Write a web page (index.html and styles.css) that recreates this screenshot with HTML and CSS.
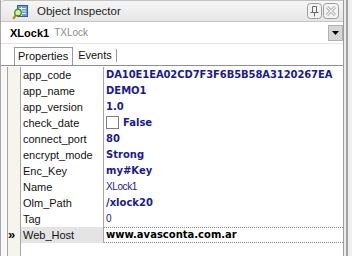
FILE: index.html
```html
<!DOCTYPE html>
<html lang="en">

<head>
  <meta charset="UTF-8">
  <title>Object Inspector</title>
  <link rel="stylesheet" href="styles.css">
</head>

<body>
  <div class="panel">
    <div class="titlebar">
      <svg class="app-icon" width="16" height="16" viewBox="0 0 16 16">
        <rect x="5.5" y="1.5" width="10" height="11" fill="#6d9ad6" stroke="#2f5f9e" />
        <path d="M7 4.5h7M7 7h7M7 9.5h7" stroke="#e8f0fb" />
        <path d="M9.5 3v9" stroke="#e8f0fb" />
        <line x1="4" y1="11" x2="1.2" y2="14.8" stroke="#b78a1c" stroke-width="2.2" />
        <circle cx="6" cy="8.5" r="3.3" fill="#d9efb0" stroke="#4f8f1d" stroke-width="1.4" />
      </svg>
      <span class="title">Object Inspector</span>
      <div class="title-buttons">
        <svg class="tbtn" width="15" height="16" viewBox="0 0 15 16">
          <rect x="0.5" y="0.5" width="14" height="15" rx="3" fill="#f3f3f3" stroke="#9c9c9c" />
          <path d="M5.5 3.5h4v6h-4z" fill="none" stroke="#6a6a6a" />
          <path d="M3.5 9.5h8M7.5 9.5v4" stroke="#6a6a6a" />
        </svg>
        <svg class="tbtn" width="16" height="16" viewBox="0 0 16 16">
          <rect x="0.5" y="0.5" width="15" height="15" rx="3" fill="#f3f3f3" stroke="#9c9c9c" />
          <path d="M4 4l8 8M12 4l-8 8" stroke="#a4a4a4" stroke-width="3" />
          <path d="M4 4l8 8M12 4l-8 8" stroke="#f3f3f3" stroke-width="1.2" />
        </svg>
      </div>
    </div>

    <div class="combo">
      <span class="obj-name">XLock1</span>
      <span class="obj-class">TXLock</span>
      <span class="drop">
        <svg width="7" height="4" viewBox="0 0 7 4"><path d="M0 0h7L3.5 4z" fill="#000" /></svg>
      </span>
    </div>

    <div class="tabs">
      <span class="tab active">Properties</span>
      <span class="tab">Events</span>
    </div>

    <div class="grid">
      <div class="side"></div>
      <div class="gutter">
        <div class="mark"></div>
        <div class="mark"></div>
        <div class="mark"></div>
        <div class="mark"></div>
        <div class="mark"></div>
        <div class="mark"></div>
        <div class="mark"></div>
        <div class="mark"></div>
        <div class="mark"></div>
        <div class="mark"></div>
        <div class="mark">&raquo;</div>
      </div>
      <div class="props">
        <div class="row"><span class="name">app_code</span><span class="value strong hex">DA10E1EA02CD7F3F6B5B58A3120267EA</span></div>
        <div class="row"><span class="name">app_name</span><span class="value strong">DEMO1</span></div>
        <div class="row"><span class="name">app_version</span><span class="value strong">1.0</span></div>
        <div class="row"><span class="name">check_date</span><span class="value strong"><span class="check"></span>False</span></div>
        <div class="row"><span class="name">connect_port</span><span class="value strong">80</span></div>
        <div class="row"><span class="name">encrypt_mode</span><span class="value strong">Strong</span></div>
        <div class="row"><span class="name">Enc_Key</span><span class="value strong">my#Key</span></div>
        <div class="row"><span class="name">Name</span><span class="value plain">XLock1</span></div>
        <div class="row"><span class="name">Olm_Path</span><span class="value strong">/xlock20</span></div>
        <div class="row"><span class="name">Tag</span><span class="value plain">0</span></div>
        <div class="row current"><span class="name">Web_Host</span><span class="value strong">www.avasconta.com.ar</span></div>
      </div>
    </div>
  </div>
  <div class="edge"></div>
</body>

</html>
```

FILE: styles.css
```css
* {
  box-sizing: border-box;
}

body {
  margin: 0;
  width: 352px;
  height: 256px;
  display: flex;
  background: #efefef;
  font-family: "Liberation Sans", Arial, sans-serif;
  font-size: 11px;
  color: #000;
  overflow: hidden;
}

.panel {
  width: 344px;
  height: 256px;
  display: flex;
  flex-direction: column;
  background: #fff;
  border-left: 1px solid #a9a9a9;
  border-right: 1px solid #9d9d9d;
}

.edge {
  width: 4px;
  background: #ececec;
  border-right: 2px solid #a3a3a3;
}

/* title bar */
.titlebar {
  height: 22px;
  display: flex;
  align-items: center;
  padding-left: 11px;
  background: linear-gradient(#f6f6f6, #e6e6e6);
  border-top: 1px solid #c2c2c2;
  border-bottom: 1px solid #c4c4c4;
  border-radius: 4px 0 0 0;
}

.app-icon {
  margin-top: 1px;
}

.title {
  margin-left: 9px;
  font-size: 11.5px;
  color: #1e1e1e;
}

.title-buttons {
  margin-left: auto;
  margin-right: 4px;
  display: flex;
  gap: 1px;
}

/* object selector */
.combo {
  height: 22px;
  display: flex;
  align-items: center;
  padding-left: 9px;
  border-bottom: 1px solid #e4e4e4;
}

.obj-name {
  font-weight: bold;
}

.obj-class {
  margin-left: 5px;
  font-size: 10px;
  color: #8a8a8a;
}

.drop {
  margin-left: auto;
  width: 15px;
  height: 16px;
  display: flex;
  align-items: center;
  justify-content: center;
  background: #d6d6d6;
  border: 1px solid #b0b0b0;
}

/* tabs */
.tabs {
  height: 22px;
  display: flex;
  align-items: flex-end;
  padding-left: 13px;
  border-bottom: 1px solid #8f8f8f;
}

.tab {
  height: 18px;
  line-height: 16px;
  padding: 0 4px 0 5px;
  color: #111;
}

.tab.active {
  border: 1px solid #9a9a9a;
  border-bottom: none;
  background: #fff;
  padding: 0 4px 0 3px;
}

.tab:last-child {
  height: 13px;
  line-height: 12px;
  margin-bottom: 3px;
  border-right: 1px solid #9a9a9a;
}

/* property grid */
.grid {
  flex: 1;
  display: flex;
  padding-top: 1px;
}

.side {
  width: 7px;
  background: #f8f8f8;
  border-right: 1px solid #a6a6a6;
}

.gutter {
  width: 13px;
  background: #f6f4ec;
  border-right: 1px solid #a6a6a6;
}

.mark {
  height: 16px;
  line-height: 16px;
  font-size: 13px;
  font-weight: bold;
}

.props {
  flex: 1;
}

.row {
  height: 16px;
  display: flex;
  line-height: 16px;
}

.name {
  width: 83px;
  padding-left: 2px;
  border-right: 1px solid #a6a6a6;
  color: #111;
}

.value {
  flex: 1;
  padding-left: 2px;
  color: #1b1b8c;
  white-space: nowrap;
}

.strong {
  font-family: "DejaVu Sans", Verdana, sans-serif;
  font-size: 10px;
  font-weight: bold;
}

.hex {
  letter-spacing: -0.1px;
}

.plain {
  font-size: 10px;
  letter-spacing: -0.4px;
}

.check {
  display: inline-block;
  width: 13px;
  height: 13px;
  margin-right: 4px;
  vertical-align: -3px;
  border: 1px solid #7f7f7f;
  background: #fff;
}

.row.current .name {
  background: #e4e4e4;
}

.row.current .value {
  color: #000;
  line-height: 14px;
  border-top: 1px dotted #8c8c8c;
  border-bottom: 1px dotted #8c8c8c;
}
```
